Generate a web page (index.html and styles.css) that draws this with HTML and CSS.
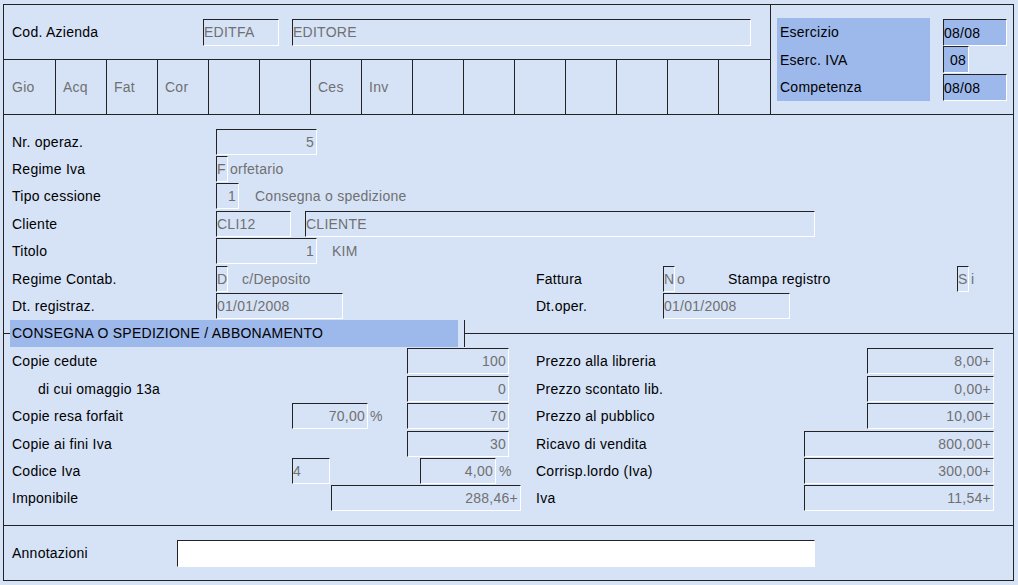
FILE: index.html
```html
<!DOCTYPE html>
<html lang="it">
<head>
<meta charset="utf-8">
<title>Operazione</title>
<link rel="stylesheet" href="styles.css">
</head>
<body>
<div class="frame">
  <div class="top">
    <div class="top-main">
      <div class="head-row">
        <span class="lbl w191">Cod. Azienda</span>
        <span class="box h27 w76">EDITFA</span>
        <span class="box h27 w459 ml13">EDITORE</span>
      </div>
      <div class="tabs">
        <div class="tab">Gio</div>
        <div class="tab">Acq</div>
        <div class="tab">Fat</div>
        <div class="tab">Cor</div>
        <div class="tab"></div>
        <div class="tab"></div>
        <div class="tab">Ces</div>
        <div class="tab">Inv</div>
        <div class="tab"></div>
        <div class="tab"></div>
        <div class="tab"></div>
        <div class="tab"></div>
        <div class="tab"></div>
        <div class="tab"></div>
        <div class="tab"></div>
      </div>
    </div>
    <div class="top-side">
      <div class="period-labels">
        <div>Esercizio</div>
        <div>Eserc. IVA</div>
        <div>Competenza</div>
      </div>
      <div class="period-inputs">
        <span class="box blue w64">08/08</span>
        <span class="box blue w26 r">08</span>
        <span class="box blue w64 mt1">08/08</span>
      </div>
    </div>
  </div>

  <div class="body">
    <div class="sec1">
      <div class="row">
        <span class="lbl w204">Nr. operaz.</span>
        <span class="box w101 r">5</span>
      </div>
      <div class="row">
        <span class="lbl w204">Regime Iva</span>
        <span class="box w12">F</span>
        <span class="dim ml2">orfetario</span>
      </div>
      <div class="row">
        <span class="lbl w204">Tipo cessione</span>
        <span class="box w23 r">1</span>
        <span class="dim ml16">Consegna o spedizione</span>
      </div>
      <div class="row">
        <span class="lbl w204">Cliente</span>
        <span class="box w75">CLI12</span>
        <span class="box w510 ml14">CLIENTE</span>
      </div>
      <div class="row">
        <span class="lbl w204">Titolo</span>
        <span class="box w101 r">1</span>
        <span class="dim ml15">KIM</span>
      </div>
      <div class="row">
        <div class="half">
          <span class="lbl w204">Regime Contab.</span>
          <span class="box w12">D</span>
          <span class="dim ml14">c/Deposito</span>
        </div>
        <span class="lbl w127">Fattura</span>
        <span class="box w12">N</span>
        <span class="dim ml2 w51">o</span>
        <span class="lbl w229">Stampa registro</span>
        <span class="box w12">S</span>
        <span class="dim ml2">i</span>
      </div>
      <div class="row">
        <div class="half">
          <span class="lbl w204">Dt. registraz.</span>
          <span class="box w127">01/01/2008</span>
        </div>
        <span class="lbl w127">Dt.oper.</span>
        <span class="box w127">01/01/2008</span>
      </div>
    </div>

    <div class="group">
      <span class="gline w6"></span>
      <span class="gbar">CONSEGNA O SPEDIZIONE / ABBONAMENTO</span>
      <span class="gspace"></span>
      <span class="gtick"></span>
      <span class="gline grow"></span>
    </div>

    <div class="sec2">
      <div class="row">
        <div class="half">
          <span class="lbl w395">Copie cedute</span>
          <span class="box w102 r">100</span>
        </div>
        <div class="side">
          <span class="lbl grow">Prezzo alla libreria</span>
          <span class="box w127 r">8,00+</span>
        </div>
      </div>
      <div class="row">
        <div class="half">
          <span class="lbl w395 indent">di cui omaggio 13a</span>
          <span class="box w102 r">0</span>
        </div>
        <div class="side">
          <span class="lbl grow">Prezzo scontato lib.</span>
          <span class="box w127 r">0,00+</span>
        </div>
      </div>
      <div class="row">
        <div class="half">
          <span class="lbl w280">Copie resa forfait</span>
          <span class="box w76 r">70,00</span>
          <span class="dim ml2 w37">%</span>
          <span class="box w102 r">70</span>
        </div>
        <div class="side">
          <span class="lbl grow">Prezzo al pubblico</span>
          <span class="box w127 r">10,00+</span>
        </div>
      </div>
      <div class="row">
        <div class="half">
          <span class="lbl w395">Copie ai fini Iva</span>
          <span class="box w102 r">30</span>
        </div>
        <div class="side">
          <span class="lbl grow">Ricavo di vendita</span>
          <span class="box w190 r">800,00+</span>
        </div>
      </div>
      <div class="row">
        <div class="half">
          <span class="lbl w280">Codice Iva</span>
          <span class="box w38">4</span>
          <span class="box w76 r ml90">4,00</span>
          <span class="dim ml3">%</span>
        </div>
        <div class="side">
          <span class="lbl grow">Corrisp.lordo (Iva)</span>
          <span class="box w190 r">300,00+</span>
        </div>
      </div>
      <div class="row">
        <div class="half">
          <span class="lbl w319">Imponibile</span>
          <span class="box w190 r">288,46+</span>
        </div>
        <div class="side">
          <span class="lbl grow">Iva</span>
          <span class="box w190 r">11,54+</span>
        </div>
      </div>
    </div>
  </div>

  <div class="notes">
    <span class="lbl w165">Annotazioni</span>
    <span class="box h27 w638 white"></span>
  </div>
</div>
</body>
</html>
```

FILE: styles.css
```css
html, body {
  margin: 0;
  padding: 0;
}

body {
  background: #d6e3f7;
  font-family: "Liberation Sans", Arial, sans-serif;
  font-size: 14px;
  letter-spacing: 0.25px;
  color: #000;
  width: 1018px;
  height: 585px;
  overflow: hidden;
}

.frame {
  margin: 4px 0 0 3px;
  width: 1011px;
  height: 577px;
  box-sizing: border-box;
  border: 1px solid #222;
  display: flex;
  flex-direction: column;
}

/* ---------- top ---------- */
.top {
  display: flex;
  height: 110px;
  flex: 0 0 110px;
  box-sizing: border-box;
  border-bottom: 1px solid #222;
}

.top-main {
  width: 767px;
  box-sizing: border-box;
  border-right: 1px solid #222;
  display: flex;
  flex-direction: column;
}

.head-row {
  height: 55px;
  flex: 0 0 55px;
  box-sizing: border-box;
  border-bottom: 1px solid #222;
  display: flex;
  align-items: center;
  padding-left: 8px;
}

.tabs {
  flex: 1;
  display: grid;
  grid-template-columns: repeat(15, 1fr);
  padding-left: 1px;
}

.tab {
  border-right: 1px solid #222;
  display: flex;
  align-items: center;
  padding-left: 7px;
  color: #707070;
}

.tab:last-child {
  border-right: none;
}

.top-side {
  flex: 1;
  display: flex;
  align-items: flex-start;
  padding: 13px 0 0 6px;
  gap: 13px;
}

.period-labels {
  width: 153px;
  height: 83px;
  background: #9db9ec;
  display: flex;
  flex-direction: column;
}

.period-labels div {
  flex: 1;
  display: flex;
  align-items: center;
  padding-left: 3px;
}

.period-inputs {
  display: flex;
  flex-direction: column;
  align-items: flex-start;
  padding-top: 1px;
}

/* ---------- generic ---------- */
.lbl {
  display: inline-block;
  white-space: nowrap;
  flex: 0 0 auto;
}

.dim {
  color: #707070;
  white-space: nowrap;
  flex: 0 0 auto;
}

.box {
  box-sizing: border-box;
  height: 26px;
  flex: 0 0 auto;
  display: flex;
  align-items: center;
  border-top: 1px solid #222;
  border-left: 1px solid #222;
  border-right: 1px solid #fff;
  border-bottom: 1px solid #fff;
  color: #707070;
  white-space: nowrap;
  overflow: hidden;
}

.box.h27 { height: 27px; }
.box.r { justify-content: flex-end; padding-right: 2px; }
.box.blue { background: #9db9ec; color: #000; height: 27px; }
.box.white { background: #fff; }

.grow { flex: 1 1 auto; }

.w6 { width: 6px; }
.w12 { width: 12px; }
.w23 { width: 23px; }
.w26 { width: 26px; }
.w37 { width: 37px; display: inline-block; }
.w38 { width: 38px; }
.w51 { width: 51px; display: inline-block; }
.w64 { width: 64px; }
.w75 { width: 75px; }
.w76 { width: 76px; }
.w101 { width: 101px; }
.w102 { width: 102px; }
.w127 { width: 127px; }
.w165 { width: 165px; }
.w190 { width: 190px; }
.w191 { width: 191px; }
.w204 { width: 204px; }
.w229 { width: 229px; }
.w280 { width: 280px; }
.w319 { width: 319px; }
.w395 { width: 395px; }
.w459 { width: 459px; }
.w510 { width: 510px; }
.w638 { width: 638px; }

.ml2 { margin-left: 2px; }
.ml3 { margin-left: 3px; }
.ml13 { margin-left: 13px; }
.ml14 { margin-left: 14px; }
.ml15 { margin-left: 15px; }
.ml16 { margin-left: 16px; }
.ml90 { margin-left: 90px; }
.mt1 { margin-top: 1px; }

.indent { padding-left: 26px; box-sizing: border-box; }

/* ---------- body ---------- */
.body {
  height: 411px;
  flex: 0 0 411px;
  box-sizing: border-box;
  border-bottom: 1px solid #222;
  display: flex;
  flex-direction: column;
}

.sec1 {
  padding: 13px 0 0 8px;
}

.sec2 {
  padding: 1px 0 0 8px;
}

.row {
  height: 27.4px;
  display: flex;
  align-items: center;
}

.half {
  width: 524px;
  flex: 0 0 524px;
  display: flex;
  align-items: center;
  height: 100%;
}

.side {
  flex: 1;
  display: flex;
  align-items: center;
  padding-right: 19px;
  height: 100%;
}

.group {
  height: 27px;
  flex: 0 0 27px;
  display: flex;
}

.gline {
  display: block;
  background: linear-gradient(#222, #222) 0 13px / 100% 1px no-repeat;
}

.gbar {
  width: 448px;
  box-sizing: border-box;
  background: #9db9ec;
  display: flex;
  align-items: center;
  padding-left: 2px;
  white-space: nowrap;
}

.gspace {
  width: 6px;
}

.gtick {
  width: 1px;
  background: #222;
}

/* ---------- notes ---------- */
.notes {
  flex: 1;
  display: flex;
  align-items: center;
  padding-left: 8px;
}
```
